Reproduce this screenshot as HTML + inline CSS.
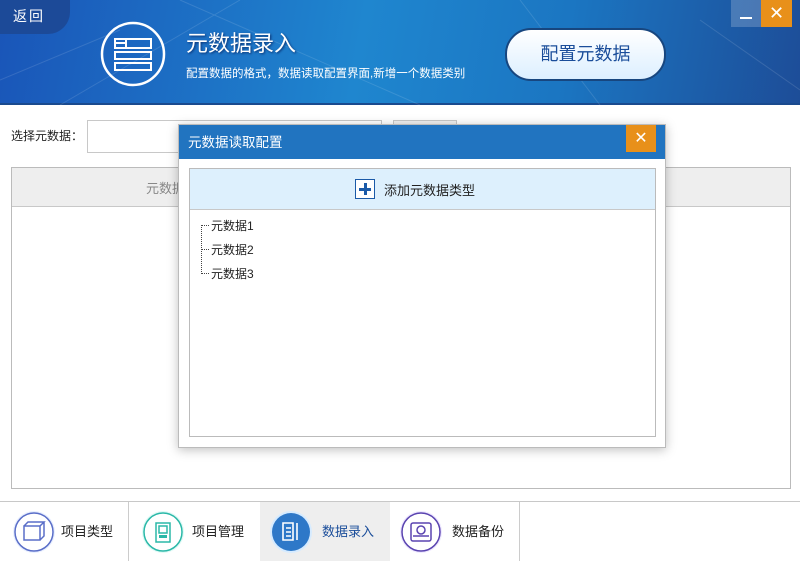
<!DOCTYPE html>
<html><head><meta charset="utf-8"><style>
*{margin:0;padding:0;box-sizing:border-box}
body{width:800px;height:561px;position:relative;overflow:hidden;background:#fff;font-family:"Liberation Sans","Noto Sans CJK SC",sans-serif;font-size:12px;color:#222}
.abs{position:absolute}
#hdr{left:0;top:0;width:800px;height:105px;background:linear-gradient(100deg,#1a55b8 0%,#1f86cf 45%,#1b76c2 70%,#1d4d98 100%);border-bottom:2px solid #1a4a8e}
</style></head><body>
<div id="hdr" class="abs">
 <svg class="abs" style="left:0;top:0" width="800" height="105"><g stroke="#fff" stroke-opacity=".12" fill="none"><path d="M60 105 L240 0 M180 0 L420 105 M520 0 L600 105 M700 20 L800 90 M0 80 L120 30"/></g></svg>
 <div class="abs" style="left:0;top:0;width:70px;height:34px;background:#1c4a98;border-bottom-right-radius:22px;color:#fff;font-size:14px;line-height:32px;padding-left:13px;letter-spacing:2px">返回</div>
 <svg class="abs" style="left:100px;top:21px" width="66" height="66"><circle cx="33" cy="33" r="31" fill="none" stroke="#fff" stroke-width="2.5"/><g fill="none" stroke="#fff" stroke-width="2"><rect x="15" y="18" width="36" height="9"/><rect x="15" y="31" width="36" height="7"/><rect x="15" y="42" width="36" height="7"/><path d="M26 18v9M15 22h11"/></g></svg>
 <div class="abs" style="left:186px;top:26px;color:#fff;font-size:22px;text-shadow:1px 1px 2px #0a3070">元数据录入</div>
 <div class="abs" style="left:186px;top:65px;color:#fff;font-size:11.5px">配置数据的格式，数据读取配置界面,新增一个数据类别</div>
 <div class="abs" style="left:505px;top:28px;width:161px;height:53px;border-radius:26px;background:linear-gradient(#fff,#dcefff);border:2px solid #17467f;color:#1a4d9a;font-size:18px;text-align:center;line-height:49px">配置元数据</div>
 <div class="abs" style="left:731px;top:0;width:30px;height:27px;background:rgba(255,255,255,.2)"><div class="abs" style="left:9px;top:17px;width:12px;height:2px;background:#fff"></div></div>
 <div class="abs" style="left:761px;top:0;width:31px;height:27px;background:#e8901a;color:#fff;font-size:18px;text-align:center;line-height:27px">✕</div>
</div>
<div class="abs" style="left:11px;top:127px">选择元数据：</div>
<div class="abs" style="left:87px;top:120px;width:295px;height:33px;border:1px solid #c8c8c8"></div>
<div class="abs" style="left:393px;top:120px;width:64px;height:33px;border:1px solid #c8c8c8;background:#f0f0f0"></div>
<div class="abs" style="left:11px;top:167px;width:780px;height:322px;border:1px solid #bbb"></div>
<div class="abs" style="left:12px;top:168px;width:778px;height:39px;background:#eee;border-bottom:1px solid #c8c8c8;color:#888;font-size:13px;line-height:42px;padding-left:134px">元数据</div>
<div class="abs" style="left:178px;top:124px;width:488px;height:324px;background:#fff;border:1px solid #bbb;box-shadow:0 2px 10px rgba(0,0,0,.25)">
 <div class="abs" style="left:0;top:0;width:486px;height:34px;background:#2174c0;color:#fff;font-size:13.5px;line-height:36px;padding-left:9px">元数据读取配置</div>
 <div class="abs" style="left:447px;top:0;width:30px;height:27px;background:#e8901a;color:#fff;font-size:16px;text-align:center;line-height:27px">✕</div>
 <div class="abs" style="left:10px;top:43px;width:467px;height:269px;border:1px solid #bbb">
  <div class="abs" style="left:0;top:0;width:465px;height:41px;background:#ddf0fd;border-bottom:1px solid #c8c8c8"></div>
  <div class="abs" style="left:165px;top:10px;width:20px;height:20px;border:1px solid #1a5aa8;background:#fff"><div class="abs" style="left:3px;top:8px;width:12px;height:2.5px;background:#1a5aa8"></div><div class="abs" style="left:8px;top:3px;width:2.5px;height:12px;background:#1a5aa8"></div></div>
  <div class="abs" style="left:194px;top:11px;font-size:13px">添加元数据类型</div>
  <div class="abs" style="left:11px;top:56px;width:8px;height:49px;border-left:1px dotted #444"></div>
  <div class="abs" style="left:11px;top:56px;width:8px;border-top:1px dotted #444"></div>
  <div class="abs" style="left:11px;top:80px;width:8px;border-top:1px dotted #444"></div>
  <div class="abs" style="left:11px;top:104px;width:8px;border-top:1px dotted #444"></div>
  <div class="abs" style="left:21px;top:49px;line-height:16px">元数据1</div>
  <div class="abs" style="left:21px;top:73px;line-height:16px">元数据2</div>
  <div class="abs" style="left:21px;top:97px;line-height:16px">元数据3</div>
 </div>
</div>
<div class="abs" style="left:0;top:501px;width:800px;height:1px;background:#c8c8c8"></div>
<div class="abs" style="left:128px;top:502px;width:1px;height:59px;background:#ccc"></div>
<div class="abs" style="left:260px;top:502px;width:130px;height:59px;background:#eee"></div>
<div class="abs" style="left:519px;top:502px;width:1px;height:59px;background:#ccc"></div>
<svg class="abs" style="left:0;top:502px" width="520" height="59">
 <circle cx="34" cy="30" r="21" fill="#e8efff"/><circle cx="34" cy="30" r="19" fill="#fff" stroke="#5a6ec8" stroke-width="1.5"/>
 <path d="M24 24h16v14h-16z M24 24l4-4h16l-4 4 M44 20v14l-4 4" fill="none" stroke="#5a6ec8" stroke-width="1.5"/>
 <circle cx="163" cy="30" r="21" fill="#e0faf6"/><circle cx="163" cy="30" r="19" fill="#fff" stroke="#2bb8a8" stroke-width="1.5"/>
 <rect x="156" y="21" width="14" height="19" fill="none" stroke="#2bb8a8" stroke-width="1.5"/><rect x="159" y="24" width="8" height="7" fill="none" stroke="#2bb8a8" stroke-width="1.5"/><rect x="159" y="33" width="8" height="3" fill="#2bb8a8"/>
 <circle cx="291" cy="30" r="21" fill="#d6ebff"/><circle cx="291" cy="30" r="19" fill="#2e78c8"/>
 <path d="M283 21h10v17h-10z M286 26h5 M286 30h5 M286 34h5 M297 21v17" fill="none" stroke="#fff" stroke-width="1.6"/>
 <circle cx="421" cy="30" r="21" fill="#eee8ff"/><circle cx="421" cy="30" r="19" fill="#fff" stroke="#5a44b0" stroke-width="1.5"/>
 <rect x="411" y="21" width="20" height="18" rx="2" fill="none" stroke="#5a44b0" stroke-width="1.5"/><circle cx="421" cy="28" r="4" fill="none" stroke="#5a44b0" stroke-width="1.5"/><path d="M413 34h16" stroke="#5a44b0" stroke-width="1.5"/>
</svg>
<div class="abs" style="left:61px;top:521px;font-size:13px">项目类型</div>
<div class="abs" style="left:192px;top:521px;font-size:13px">项目管理</div>
<div class="abs" style="left:322px;top:521px;font-size:13px;color:#1a4d9a">数据录入</div>
<div class="abs" style="left:452px;top:521px;font-size:13px">数据备份</div>
</body></html>
